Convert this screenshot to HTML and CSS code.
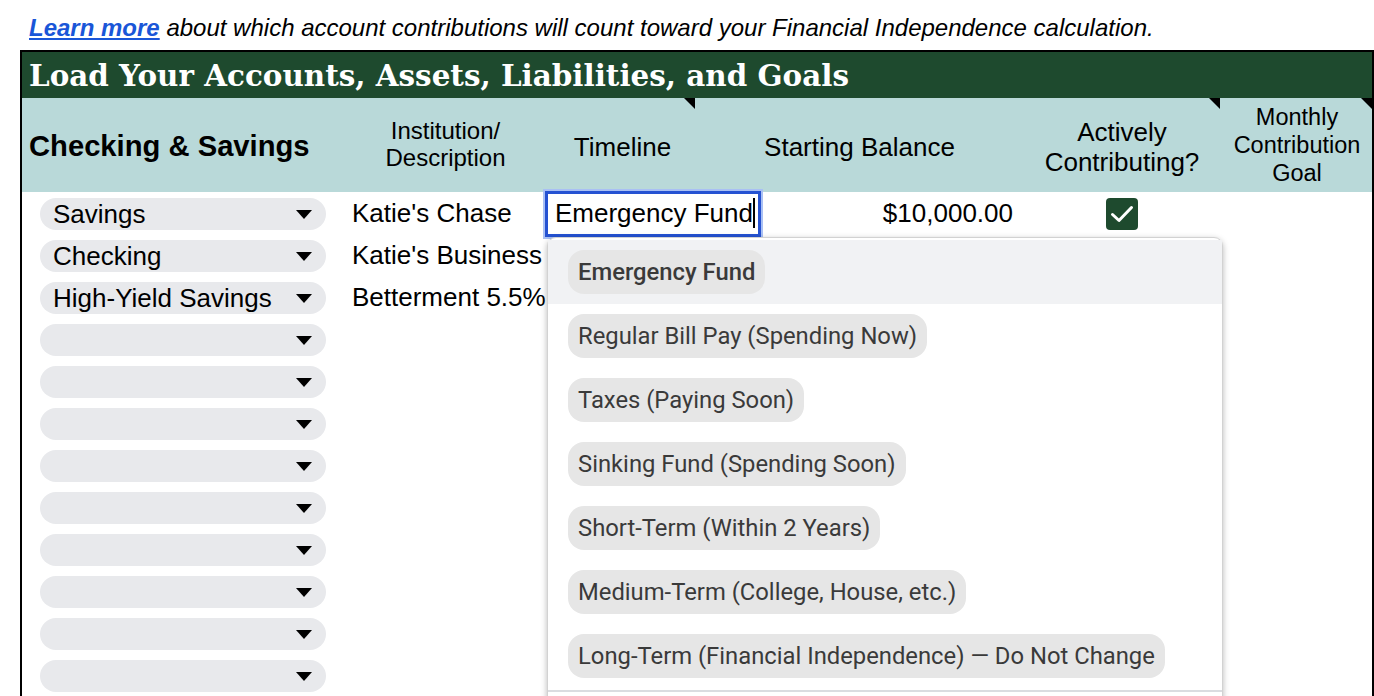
FILE: index.html
```html
<!DOCTYPE html>
<html lang="en">

<head>
    <meta charset="UTF-8">
    <meta name="viewport" content="width=device-width, initial-scale=1.0">
    <title>Load Your Accounts</title>
    <link rel="stylesheet" href="styles.css">
</head>

<body>
    <p class="intro"><a href="#" class="learn">Learn more</a> about which account contributions will count toward your Financial Independence calculation.</p>

    <div class="sheet">
        <div class="title">Load Your Accounts, Assets, Liabilities, and Goals</div>

        <div class="grid">
            <!-- header row -->
            <div class="hd hd-main">Checking &amp; Savings</div>
            <div class="hd hd-inst">Institution/<br>Description</div>
            <div class="hd hd-big note">Timeline</div>
            <div class="hd hd-big">Starting Balance</div>
            <div class="hd hd-big note">Actively<br>Contributing?</div>
            <div class="hd hd-goal note">Monthly<br>Contribution<br>Goal</div>

            <!-- row 1 -->
            <div class="cell"><div class="chip">Savings<span class="arrow"></span></div></div>
            <div class="cell txt">Katie's Chase</div>
            <div class="cell txt"></div>
            <div class="cell txt num">$10,000.00</div>
            <div class="cell center">
                <span class="check">
                    <svg class="tick" width="32" height="32" viewBox="0 0 32 32"><path d="M6.5 16.5 L13 22.5 L25.5 9.5" fill="none" stroke="#fff" stroke-width="3" stroke-linecap="round" stroke-linejoin="round"/></svg>
                </span>
            </div>
            <div class="cell"></div>

            <!-- row 2 -->
            <div class="cell"><div class="chip">Checking<span class="arrow"></span></div></div>
            <div class="cell txt">Katie's Business</div>
            <div class="cell"></div><div class="cell"></div><div class="cell"></div><div class="cell"></div>

            <!-- row 3 -->
            <div class="cell"><div class="chip">High-Yield Savings<span class="arrow"></span></div></div>
            <div class="cell txt">Betterment 5.5%</div>
            <div class="cell"></div><div class="cell"></div><div class="cell"></div><div class="cell"></div>

            <div class="cell"><div class="chip"><span class="arrow"></span></div></div><div class="cell wide"></div>
            <div class="cell"><div class="chip"><span class="arrow"></span></div></div><div class="cell wide"></div>
            <div class="cell"><div class="chip"><span class="arrow"></span></div></div><div class="cell wide"></div>
            <div class="cell"><div class="chip"><span class="arrow"></span></div></div><div class="cell wide"></div>
            <div class="cell"><div class="chip"><span class="arrow"></span></div></div><div class="cell wide"></div>
            <div class="cell"><div class="chip"><span class="arrow"></span></div></div><div class="cell wide"></div>
            <div class="cell"><div class="chip"><span class="arrow"></span></div></div><div class="cell wide"></div>
            <div class="cell"><div class="chip"><span class="arrow"></span></div></div><div class="cell wide"></div>
            <div class="cell"><div class="chip"><span class="arrow"></span></div></div><div class="cell wide"></div>
        </div>

        <!-- cell being edited -->
        <div class="editor">Emergency Fund<span class="caret"></span></div>

        <!-- timeline dropdown -->
        <div class="menu">
            <div class="opt active"><span class="pill">Emergency Fund</span></div>
            <div class="opt"><span class="pill">Regular Bill Pay (Spending Now)</span></div>
            <div class="opt"><span class="pill">Taxes (Paying Soon)</span></div>
            <div class="opt"><span class="pill">Sinking Fund (Spending Soon)</span></div>
            <div class="opt"><span class="pill">Short-Term (Within 2 Years)</span></div>
            <div class="opt"><span class="pill">Medium-Term (College, House, etc.)</span></div>
            <div class="opt"><span class="pill">Long-Term (Financial Independence) — Do Not Change</span></div>
            <div class="menu-foot"></div>
        </div>
    </div>
</body>

</html>
```

FILE: styles.css
```css
body {
    margin: 0;
    height: 696px;
    overflow: hidden;
    background: #fff;
    font-family: "Liberation Sans", Arial, sans-serif;
    color: #000;
}

.intro {
    margin: 0;
    padding: 14px 0 0 29px;
    height: 50px;
    box-sizing: border-box;
    font-size: 24px;
    font-style: italic;
    line-height: 28px;
    white-space: nowrap;
}

.learn {
    color: #1a56d8;
    font-weight: bold;
    text-decoration: underline;
}

.sheet {
    position: relative;
    margin-left: 20px;
    width: 1354px;
    box-sizing: border-box;
    border: 2px solid #000;
    border-bottom: none;
    height: 700px;
}

.title {
    background: #1e4a2e;
    color: #fff;
    height: 46px;
    padding-left: 7px;
    font-family: "DejaVu Serif", Georgia, serif;
    font-weight: bold;
    font-size: 29.4px;
    line-height: 48px;
    white-space: nowrap;
}

.grid {
    display: grid;
    grid-template-columns: 321px 205px 149px 325px 200px 150px;
    grid-template-rows: 94px;
    grid-auto-rows: 42px;
}

/* header */
.hd {
    position: relative;
    background: #b9d9d9;
    display: flex;
    align-items: center;
    justify-content: center;
    text-align: center;
}

.hd-main {
    justify-content: flex-start;
    padding-left: 7px;
    padding-top: 3px;
    font-weight: bold;
    font-size: 29.2px;
}

.hd-inst {
    font-size: 24px;
    line-height: 27px;
    padding-bottom: 2px;
}

.hd-big {
    font-size: 26px;
    line-height: 30px;
    padding-top: 3px;
}

.hd-goal {
    font-size: 23.5px;
    line-height: 28px;
}

.note::after {
    content: "";
    position: absolute;
    top: 0;
    right: 2px;
    border-top: 11px solid #000;
    border-left: 11px solid transparent;
}

.hd-goal.note::after {
    right: 0;
}

/* body rows */
.cell {
    display: flex;
    align-items: center;
    padding-top: 1px;
    font-size: 26px;
    white-space: nowrap;
    overflow: hidden;
}

.cell.wide {
    grid-column: span 5;
}

.txt {
    padding-left: 9px;
}

.num {
    justify-content: flex-end;
    padding-right: 9px;
}

.center {
    justify-content: center;
}

.chip {
    position: relative;
    margin-left: 18px;
    width: 286px;
    height: 32px;
    border-radius: 16px;
    background: #e8e9ec;
    padding-left: 13px;
    box-sizing: border-box;
    line-height: 32px;
    font-size: 26px;
}

.arrow {
    position: absolute;
    right: 14px;
    top: 12px;
    border-top: 9px solid #000;
    border-left: 8px solid transparent;
    border-right: 8px solid transparent;
}

.check {
    width: 32px;
    height: 32px;
    border-radius: 4px;
    background: #1e4a2e;
    display: block;
}

.tick {
    display: block;
}

/* edited cell */
.editor {
    position: absolute;
    left: 523px;
    top: 139px;
    width: 216px;
    height: 46px;
    box-sizing: border-box;
    border: 3px solid #2552d2;
    box-shadow: 0 0 0 2px #a9c0f4;
    background: #fff;
    padding-left: 7px;
    font-size: 26px;
    line-height: 38px;
    white-space: nowrap;
    overflow: hidden;
}

.caret {
    display: inline-block;
    width: 2px;
    height: 30px;
    background: #000;
    vertical-align: -6px;
}

/* dropdown */
.menu {
    position: absolute;
    left: 525px;
    top: 185px;
    width: 676px;
    height: 520px;
    box-sizing: border-box;
    background: #fff;
    border: 1px solid #d2d2d2;
    border-radius: 9px 9px 0 0;
    box-shadow: 0 2px 6px rgba(0, 0, 0, 0.28);
    padding-top: 2px;
    font-family: Roboto, "Liberation Sans", sans-serif;
}

.opt {
    height: 64px;
    display: flex;
    align-items: center;
    padding-left: 20px;
}

.opt.active {
    background: #f1f2f4;
}

.pill {
    background: #e6e6e6;
    border-radius: 16px;
    height: 44px;
    line-height: 44px;
    padding: 0 10px;
    font-size: 23.8px;
    color: #3a3a3a;
}

.opt.active .pill {
    font-weight: 500;
}

.menu-foot {
    margin-top: 2px;
    border-top: 2px solid #dadce0;
}
```
